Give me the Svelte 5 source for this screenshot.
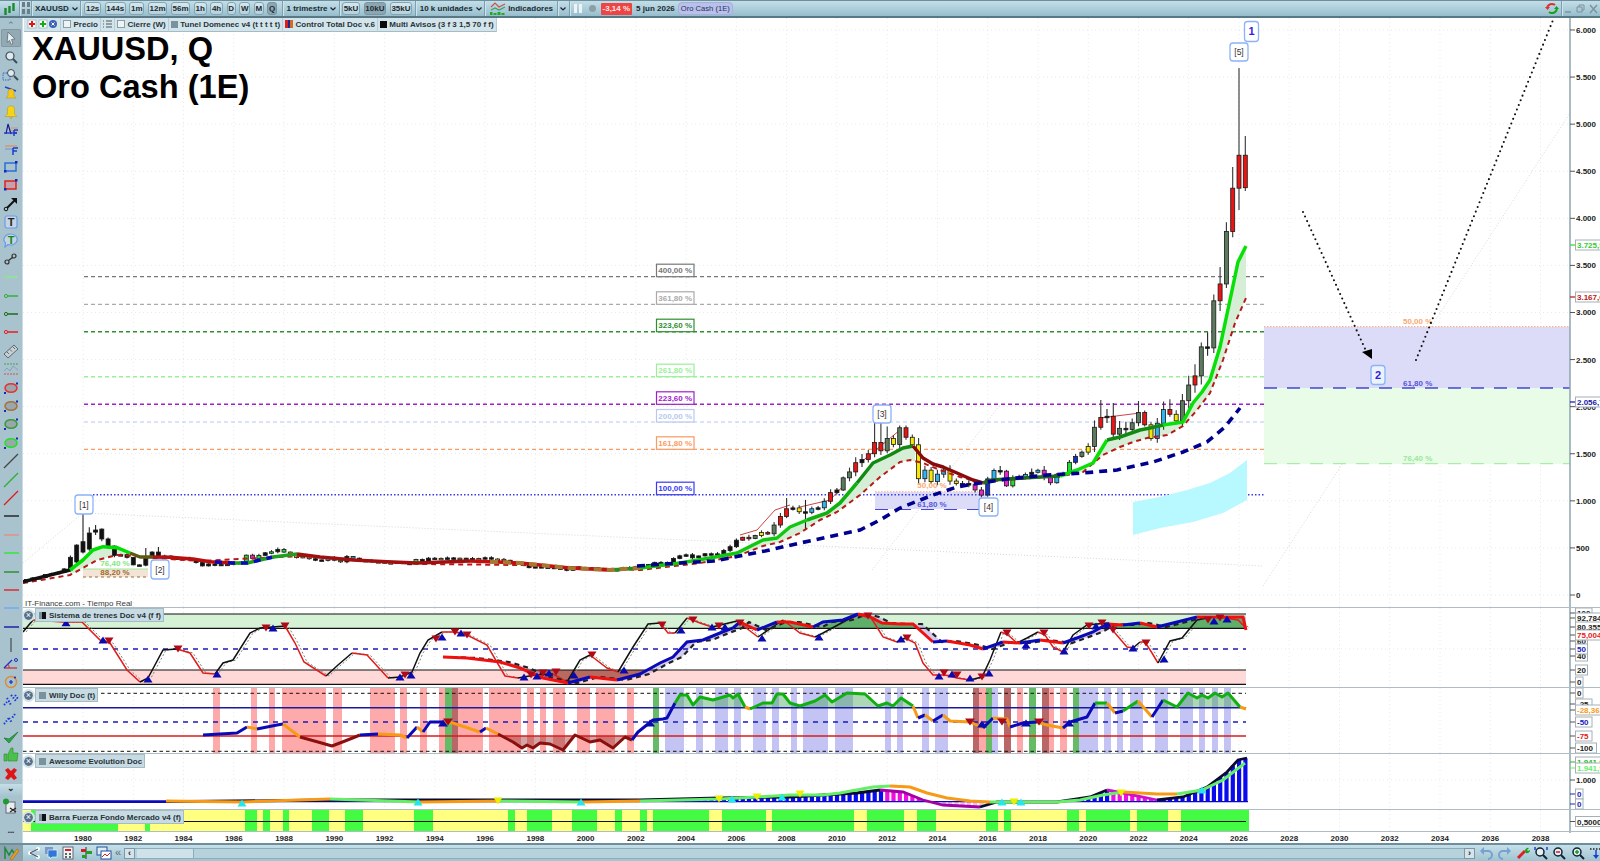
<script lang="ts">
  type Pt = [number, number];

  const yearX = (t: number) => 83 + (t - 1980) * 25.13;
  const priceY = (p: number) => 595 - p * 0.09417;
  const pts = (l: Pt[]) => l.map((p) => p[0] + "," + p[1]).join(" ");

  const interp = (l: Pt[], x: number) => {
    if (x <= l[0][0]) return l[0][1];
    for (let i = 1; i < l.length; i++) {
      if (x <= l[i][0]) {
        const [x0, y0] = l[i - 1];
        const [x1, y1] = l[i];
        return y0 + ((y1 - y0) * (x - x0)) / (x1 - x0);
      }
    }
    return l[l.length - 1][1];
  };
  const section = (l: Pt[], x0: number, x1: number): Pt[] => [
    [x0, interp(l, x0)],
    ...l.filter((p) => p[0] > x0 && p[0] < x1),
    [x1, interp(l, x1)],
  ];
  // cut a line in runs of one colour each
  const runs = (l: Pt[], colorOf: (a: Pt, b: Pt) => string) => {
    const out: { c: string; p: Pt[] }[] = [];
    for (let i = 1; i < l.length; i++) {
      const c = colorOf(l[i - 1], l[i]);
      const last = out[out.length - 1];
      if (last && last.c === c) last.p.push(l[i]);
      else out.push({ c, p: [l[i - 1], l[i]] });
    }
    return out;
  };
  const shifted = (l: Pt[], dx: number): Pt[] => l.map((p) => [p[0] + dx, p[1]]);
  const band = (top: Pt[], bottom: Pt[], x0: number, x1: number) =>
    pts([...section(top, x0, x1), ...section(bottom, x0, x1).reverse()]);
  const closedTo = (l: Pt[], y: number) => pts([[l[0][0], y], ...l, [l[l.length - 1][0], y]]);

  // quarterly closes and body colours, one row a year from 1977 on
  const rows = [
    "165|k", "181 184 217 226|kkkk", "240 277 397 512|kkkk", "494 653 666 589|kkkk",
    "513 423 428 400|kkkk", "320 317 397 456|kkkk", "414 413 394 382|kkkk", "388 378 344 309|kkkk",
    "330 317 326 327|kkkk", "346 345 423 388|kknm", "421 448 459 484|nknk", "456 437 397 410|nooo",
    "385 373 366 401|okkc", "369 352 408 391|onkc", "356 367 354 353|knko", "341 343 349 332|oook",
    "337 378 355 391|knkk", "389 385 394 383|kokk", "391 387 384 387|okko", "396 382 379 369|kkoo",
    "348 334 332 290|kkok", "301 296 294 288|kkkk", "280 262 299 290|kkkn", "277 288 273 272|kkkk",
    "258 270 293 279|kkkk", "301 318 323 347|kkkk", "336 346 388 416|kkkk", "427 395 415 438|kkkk",
    "428 437 473 513|kkkk", "582 613 599 632|krrg", "663 650 743 834|yrgr", "916 925 884 878|rkyk",
    "916 926 995 1087|ckcr", "1115 1244 1307 1405|kggr", "1439 1500 1620 1531|krrr", "1662 1598 1776 1675|gygr",
    "1595 1235 1326 1204|yycy", "1283 1327 1210 1184|ccyy", "1183 1172 1115 1061|kkmm", "1233 1322 1315 1159|bckm",
    "1249 1242 1280 1303|nkck", "1325 1253 1192 1282|cmmc", "1292 1409 1472 1517|onbg", "1577 1781 1886 1898|ygrk",
    "1708 1770 1757 1829|rgkg", "1937 1807 1661 1824|gryc", "1969 1919 1849 2063|cryg", "2230 2327 2635 2624|grgk",
    "3124 3303 3859 4320|grgr", "4670 4325|rr",
  ];
  const fills: Record<string, string> = {
    k: "#111", g: "#5b7a5e", r: "#ea1414", y: "#f6e800", c: "#2fb6ee",
    n: "#22dd33", m: "#ee22cc", b: "#1530c0", o: "#f7a21f",
  };
  const qi = (t: number) => Math.round((t - 1977.75) * 4);
  // bodies that the plain close-to-close rule gets wrong: [open, high, low, close]
  const fixed: Record<number, number[]> = {
    [qi(1979.5)]: [265, 420, 250, 400],
    [qi(1979.75)]: [350, 540, 340, 530],
    [qi(1980)]: [456, 870, 440, 566],
    [qi(1980.25)]: [488, 720, 470, 658],
    [qi(1980.5)]: [668, 743, 637, 690],
    [qi(1980.75)]: [595, 705, 570, 700],
    [qi(1981)]: [510, 610, 490, 595],
    [qi(1981.25)]: [420, 525, 400, 520],
  };
  const highs: Record<number, number> = {
    [qi(1982.5)]: 500, [qi(1983)]: 510, [qi(2008)]: 1030, [qi(2008.75)]: 1010,
    [qi(2011.5)]: 1826, [qi(2011.75)]: 1830, [qi(2012)]: 1790, [qi(2012.5)]: 1800, [qi(2012.75)]: 1800,
    [qi(2020.5)]: 2070, [qi(2021)]: 2040, [qi(2022)]: 2060, [qi(2023.25)]: 2080,
    [qi(2024.25)]: 2450, [qi(2024.5)]: 2680, [qi(2024.75)]: 2790, [qi(2025.25)]: 3483,
    [qi(2025.75)]: 4545, [qi(2026)]: 5596, [qi(2026.25)]: 4874,
  };
  const lows: Record<number, number> = {
    [qi(2008.75)]: 700, [qi(2024.75)]: 2540, [qi(2025.5)]: 3260, [qi(2025.75)]: 3800,
    [qi(2026)]: 4088, [qi(2026.25)]: 4290,
  };
  const candles: { x: number; top: number; bot: number; hi: number; lo: number; fill: string }[] = [];
  {
    let prev = 150;
    let i = 0;
    for (const row of rows) {
      const [cl, co] = row.split("|");
      cl.split(" ").forEach((s, n) => {
        const close = +s;
        const r = Math.abs(Math.sin(i * 12.9898) * 43758) % 1;
        const w = Math.max(prev, close) * 0.035 * (0.3 + r);
        let [o, h, l, c] = fixed[i] ?? [prev, Math.max(prev, close) + w, Math.min(prev, close) - w * 0.8, close];
        h = highs[i] ?? h;
        l = lows[i] ?? l;
        candles.push({
          x: +yearX(1977.75 + i / 4).toFixed(1),
          top: priceY(Math.max(o, c)),
          bot: priceY(Math.min(o, c)),
          hi: priceY(h),
          lo: priceY(l),
          fill: fills[co[n]],
        });
        prev = close;
        i++;
      });
    }
  }

  const main: Pt[] = [[23,581.7],[70,570],[83,560],[93,550],[103,546.7],[117,547.7],[130,553],[140,557],[153,557],[170,557.3],[193,559],[210,561.7],[233,563],[247,563],[273,557],[297,554],[320,557],[353,560],[387,561.7],[417,563],[470,561],[520,563],[570,568],[610,570],[640,568],[680,563],[710,558],[737,553],[763,540],[777,538],[790,527],[807,520],[827,513],[840,503],[857,483],[873,463],[890,455],[903,448],[913,446],[923,458],[933,464],[943,467],[957,473],[973,480],[983,483],[992,480],[1007,479],[1023,478],[1040,477],[1060,476],[1077,470],[1093,463],[1107,440],[1120,437],[1140,430],[1150,428],[1163,425],[1183,422],[1193,403],[1202,392],[1210,380],[1220,347],[1230,300],[1238,262],[1246,246]];
  const mainDash: Pt[] = [[23,583],[70,575],[83,568],[97,560],[117,555],[135,556],[153,558],[200,561],[300,556],[420,564],[520,565],[640,570],[700,563],[737,556],[763,546],[780,542],[800,533],[820,520],[837,512],[860,495],[880,477],[900,462],[910,460],[923,463],[940,470],[960,477],[980,482],[1007,480],[1067,475],[1083,472],[1103,455],[1120,447],[1133,442],[1147,438],[1167,435],[1183,426],[1197,410],[1210,393],[1223,360],[1235,323],[1246,298]];
  const navyDash: Pt[] = [[637,566],[680,563],[714,561],[765,551],[800,543],[860,530],[880,520],[900,508],[933,495],[957,487],[980,483],[1007,479],[1047,475],[1083,473],[1117,470],[1153,462],[1183,452],[1207,442],[1225,427],[1240,408]];
  const mainStops: [number, string][] = [[70,"#111"],[125,"#00e000"],[150,"#5c5a10"],[240,"#b80f0f"],[300,"#1f9f1f"],[470,"#a01010"],[620,"#c01010"],[640,"#1f8f1f"],[800,"#10c810"],[860,"#10b010"],[915,"#128a12"],[985,"#8a0a0a"],[1060,"#206a20"],[1105,"#08e008"],[1165,"#128a12"],[1250,"#08e008"]];
  const mainRuns = runs(main, (a, b) => (mainStops.find((s) => (a[0] + b[0]) / 2 < s[0]) ?? mainStops[0])[1]);

  const fibs = [
    { y: 276.7, t: "400,00 %", c: "#777777", d: "4 3", w: 1.3 },
    { y: 304.3, t: "361,80 %", c: "#aaaaaa", d: "4 3", w: 1.3 },
    { y: 331.7, t: "323,60 %", c: "#2f8f2f", d: "4 3", w: 1.4 },
    { y: 376.7, t: "261,80 %", c: "#98f098", d: "4 3", w: 1.4 },
    { y: 404.3, t: "223,60 %", c: "#a020c8", d: "4 3", w: 1.4 },
    { y: 422, t: "200,00 %", c: "#b8c8f0", d: "4 3", w: 1.2 },
    { y: 449.3, t: "161,80 %", c: "#fb9a62", d: "4 3", w: 1.2 },
    { y: 494.7, t: "100,00 %", c: "#3a3af0", d: "1.5 2", w: 1.5 },
  ];
  const boxes = [
    { x: 75, y: 495, w: 18, h: 19, t: "[1]" },
    { x: 151, y: 560, w: 18, h: 19, t: "[2]" },
    { x: 873, y: 405, w: 18, h: 18, t: "[3]" },
    { x: 979, y: 498, w: 19, h: 18, t: "[4]" },
    { x: 1230, y: 43, w: 18, h: 18, t: "[5]" },
  ];

  const yearTicks: number[] = [];
  for (let y = 1980; y <= 2038; y += 2) yearTicks.push(y);
  const priceTicks = [0, 500, 1000, 1500, 2000, 2500, 3000, 3500, 4000, 4500, 5000, 5500, 6000];
  const priceText = (p: number) => (p >= 1000 ? Math.floor(p / 1000) + "." + String(p % 1000).padStart(3, "0") : String(p));

  // sistema de trenes
  const fast: Pt[] = [[23,632],[33,620],[63,622],[82,622],[100,640],[110,643],[127,670],[140,682],[148,678],[163,650],[177,649],[190,653],[203,673],[215,674],[223,663],[233,660],[250,633],[260,628],[285,626],[295,643],[304,662],[326,676],[338,665],[352,653],[367,655],[388,678],[400,677],[412,672],[420,653],[428,640],[442,632],[455,632],[467,635],[487,645],[505,676],[518,678],[535,675],[553,674],[567,682],[580,660],[590,655],[607,668],[618,672],[633,647],[648,624],[660,623],[668,633],[675,633],[687,618],[700,623],[712,627],[737,621],[758,637],[783,620],[800,633],[815,637],[823,633],[847,620],[860,614],[870,616],[883,637],[897,642],[905,638],[915,643],[923,663],[933,675],[945,675],[957,678],[970,680],[982,677],[990,660],[1001,632],[1008,635],[1017,643],[1027,638],[1038,632],[1045,635],[1053,647],[1063,652],[1073,635],[1087,625],[1107,623],[1115,633],[1127,647],[1133,648],[1140,642],[1145,642],[1152,653],[1158,663],[1170,641],[1182,638],[1197,620],[1212,617],[1226,618],[1238,620],[1246,628]];
  const slow: Pt[] = [[443,657],[467,658],[500,662],[520,668],[543,678],[568,683],[590,677],[617,680],[640,674],[660,663],[673,657],[687,642],[703,640],[720,633],[733,628],[740,622],[757,630],[777,622],[790,622],[813,627],[823,622],[843,620],[858,614],[870,617],[882,623],[900,624],[913,624],[933,642],[947,641],[970,645],[983,649],[1003,642],[1020,643],[1040,640],[1063,643],[1077,638],[1093,632],[1107,624],[1123,625],[1140,623],[1157,627],[1173,623],[1197,617],[1243,617],[1246,630]];
  const slowDash = shifted(slow, 9).filter((p) => p[0] <= 1246);
  const trainsUp: Pt[] = [[66,622.7],[103,640],[148,679],[217,674],[273,628],[400,677],[411,675],[442,637],[461,633],[524,677],[537,676],[549,673],[574,675],[624,670],[681,630],[712,627],[725,627],[762,638],[819,637],[901,639],[939,676],[952,674],[970,678],[989,673],[1026,645],[1064,651],[1096,626],[1108,625],[1133,648],[1164,659],[1214,621],[1227,619]];
  const trainsDown: Pt[] = [[109,641],[178,649],[266,628],[285,626],[405,675],[436,639],[455,632],[467,635],[531,675],[543,673],[556,672],[592,655],[662,625],[693,620],[719,626],[740,623],[868,616],[907,638],[944,673],[957,675],[982,677],[1007,633],[1044,633],[1089,626],[1102,623],[1113,630],[1146,643],[1208,620],[1220,618]];

  // willy
  const R = "#ffaaaa", B = "#c4c4f4", G = "#66bb66", D = "#b86868";
  const willyBands: [number, number, string][] = [[213,220,R],[251,257,R],[269,275,R],[282,326,R],[333,342,R],[370,395,R],[400,407,R],[420,427,R],[439,445,R],[445,452,G],[452,458,D],[458,483,R],[489,521,R],[527,534,R],[540,546,R],[553,565,R],[577,590,R],[596,615,R],[627,634,R],[653,659,G],[665,684,B],[696,703,B],[715,728,B],[734,741,B],[753,766,B],[772,779,B],[791,797,B],[803,828,B],[835,853,B],[885,891,B],[897,903,B],[922,929,B],[935,948,B],[973,979,D],[979,986,R],[986,992,G],[992,998,B],[1004,1011,D],[1017,1023,R],[1029,1036,G],[1042,1049,D],[1049,1054,R],[1060,1067,R],[1073,1079,G],[1079,1098,B],[1104,1111,B],[1117,1123,B],[1130,1143,B],[1155,1168,B],[1180,1193,B],[1199,1205,B],[1212,1218,B],[1224,1231,B]];
  const willy: Pt[] = [[203,735],[237,733],[247,727],[257,729],[277,725],[283,724],[300,737],[318,742],[332,746],[345,741],[360,735],[378,734],[400,735],[407,738],[417,727],[423,732],[430,722],[442,722],[453,723],[480,732],[486,728],[498,734],[513,742],[522,748],[527,745],[533,748],[540,743],[550,744],[563,750],[575,735],[590,742],[600,740],[613,748],[625,737],[632,740],[638,732],[653,720],[663,719],[667,718],[675,703],[680,695],[687,695],[693,705],[700,697],[713,700],[730,695],[733,698],[738,694],[745,707],[750,709],[763,703],[772,703],[777,694],[783,694],[790,703],[800,706],[815,701],[825,695],[832,702],[847,693],[865,694],[878,706],[887,703],[893,706],[901,698],[913,706],[918,718],[925,715],[933,721],[943,715],[950,721],[970,722],[983,728],[993,718],[1007,719],[1010,727],[1023,723],[1037,722],[1047,725],[1063,728],[1070,722],[1087,717],[1095,703],[1107,703],[1115,713],[1123,711],[1138,701],[1152,717],[1163,700],[1177,707],[1188,693],[1197,698],[1202,695],[1208,698],[1215,693],[1222,697],[1228,693],[1240,707],[1246,709]];
  const willyColor = (a: Pt, b: Pt) => {
    const y = (a[1] + b[1]) / 2;
    if (y < 707.7) return "#10b010";
    if (y > 737) return "#8a1010";
    return b[1] <= a[1] ? "#0a0ab8" : "#f79a16";
  };
  const willyUp: Pt[] = [[443,723],[650,723],[982,724],[1026,723],[1069,723]];
  const willyDown: Pt[] = [[448,722],[970,722],[1002,722],[1039,722]];

  // awesome evolution
  const aoSignal: Pt[] = [[166,801],[242,802],[330,799],[420,802],[500,801],[582,802],[640,801],[720,799],[757,797],[790,795],[823,795],[840,793],[873,787],[890,786],[910,787],[927,793],[947,798],[970,801],[990,802],[1057,802],[1080,800],[1103,795],[1123,792],[1157,794],[1177,794],[1202,790],[1223,780],[1245,763]];
  const aoBlack: Pt[] = [[23,801.7],[166,801.7],[330,800],[500,800],[640,800],[720,798],[790,797],[857,793],[880,790],[903,792],[923,800],[943,805],[980,807],[997,802],[1057,802],[1090,797],[1107,790],[1123,793],[1157,800],[1183,797],[1207,787],[1227,772],[1238,760],[1247,758]];
  const sigRuns = runs(aoSignal, (a, b) => {
    const m = (a[0] + b[0]) / 2;
    if (m < 330) return "#f79a16";
    if (m < 420) return "#66ee66";
    if (m < 500) return "#f79a16";
    if (m < 600) return "#66ee66";
    if (m < 625) return "#f79a16";
    if (m < 890) return "#66ee66";
    if (m < 990) return "#f79a16";
    if (m < 1123) return "#66ee66";
    if (m < 1170) return "#f79a16";
    return "#66ee66";
  });
  const blackRuns = runs(aoBlack, (a, b) => {
    const m = (a[0] + b[0]) / 2;
    if (m < 166) return "#0a0ab8";
    if (m > 890 && m < 985) return "#a400a4";
    if (m > 1110 && m < 1165) return "#cc10cc";
    return "#0a0a30";
  });
  const aoBars = candles
    .filter((c) => c.x > 640)
    .map((c) => {
      const y = interp(aoBlack, c.x);
      const prev = interp(aoBlack, c.x - 6.3);
      const base = 801;
      return {
        x: c.x - 2,
        y: Math.min(y, base),
        h: Math.abs(base - y),
        fill: y > base ? "#f6b8e4" : y <= prev ? "#0a0aee" : "#ee10dd",
      };
    });
  const cyanTri: Pt[] = [[242,803],[418,802],[581,802],[732,799],[782,797],[1002,802],[1021,802],[1202,790]];
  const yellowTri: Pt[] = [[498,801],[719,799],[757,797],[800,794],[1014,802],[1121,793]];

  const forceGreen: [number, number][] = [[31,118],[145,150],[245,257],[263,270],[283,289],[312,329],[345,363],[414,433],[508,515],[527,552],[572,597],[615,622],[640,647],[653,709],[722,766],[772,854],[867,904],[917,936],[986,998],[1004,1011],[1067,1079],[1086,1130],[1137,1168],[1181,1249]];

  const up = (p: Pt, s = 4.5) => `${p[0] - s},${p[1] + 3.5} ${p[0] + s},${p[1] + 3.5} ${p[0]},${p[1] - 3.5}`;
  const down = (p: Pt, s = 4.5) => `${p[0] - s},${p[1] - 3.5} ${p[0] + s},${p[1] - 3.5} ${p[0]},${p[1] + 3.5}`;

  const scale1 = [
    { y: 613, t: "100" }, { y: 618, t: "92,784" }, { y: 627, t: "80,355" }, { y: 641, t: "60" },
    { y: 635, t: "75,004", c: "#e82020" }, { y: 656, t: "40" }, { y: 649, t: "50", c: "#2020c0" }, { y: 670, t: "20" }, { y: 682, t: "0" },
  ];
  const scale2 = [
    { y: 693, t: "0" }, { y: 704, t: "-25" }, { y: 710, t: "-28,361", c: "#f79a16" },
    { y: 722, t: "-50", c: "#2020c0" }, { y: 736, t: "-75", c: "#e02020" }, { y: 748, t: "-100" },
  ];
  const scale3 = [
    { y: 762, t: "1.941,9", c: "#22bb22" }, { y: 768, t: "1.941,9", c: "#66ee66" }, { y: 794, t: "0", c: "#2020c0" }, { y: 804, t: "0", c: "#2020c0" },
  ];

  const frames = ["12s", "144s", "1m", "12m", "56m", "1h", "4h", "D", "W", "M", "Q"];
  const volumes = ["5kU", "10kU", "35kU"];
  const tools: { k: string; c?: string }[] = [
    { k: "arrow" }, { k: "mag" }, { k: "zoomrect" }, { k: "alert" }, { k: "bell" }, { k: "fib" }, { k: "linesf" },
    { k: "para", c: "#7f9ccc" }, { k: "para", c: "#c44" }, { k: "bigarrow" }, { k: "tbox" }, { k: "tbubble" }, { k: "link" },
    { k: "dotline", c: "#8ce88c" }, { k: "dotline", c: "#35b035" }, { k: "dotline", c: "#1a6e1a" }, { k: "dotline", c: "#e81c1c" },
    { k: "ruler" }, { k: "bands" },
    { k: "ell", c: "#e83030" }, { k: "ell", c: "#a87038" }, { k: "ell", c: "#3a9a3a" }, { k: "ell", c: "#22e022" },
    { k: "diag", c: "#444" }, { k: "diag", c: "#28b028" }, { k: "diag", c: "#e01818" },
    { k: "h", c: "#111" }, { k: "h", c: "#f08a78" }, { k: "h", c: "#22ee22" }, { k: "h", c: "#1a8a1a" }, { k: "h", c: "#e01818" }, { k: "h", c: "#6aa8f8" }, { k: "h", c: "#0a0aa0" },
    { k: "v" }, { k: "angle" }, { k: "target" }, { k: "dots" }, { k: "dots2" }, { k: "check" }, { k: "thumb" }, { k: "cross" },
  ];
</script>

<div class="app">
  <header class="topbar">
    <svg class="ic first" width="12" height="14" viewBox="0 0 12 14">
      <path d="M1.500 6v7M5.500 4v7M9.500 1v8" stroke="#1c8a2c" stroke-width="2.400" />
    </svg>
    <span class="sep"></span>
    <svg class="ic" width="8" height="13" viewBox="0 0 8 13">
      <rect x="0" y="0" width="3" height="5" fill="#6d7d85" /><rect x="5" y="0" width="3" height="5" fill="#6d7d85" />
      <rect x="0" y="7" width="3" height="5" fill="#6d7d85" /><rect x="5" y="7" width="3" height="5" fill="#6d7d85" />
    </svg>
    <span class="sep"></span>
    <span class="sym">XAUUSD</span>
    <svg class="caret" width="6" height="4" viewBox="0 0 6 4"><path d="M.5 .5L3 3 5.500 .5" fill="none" stroke="#223" stroke-width="1.200" /></svg>
    <span class="sep"></span>
    <div class="btns one">
      {#each frames as f}
        <span class="tf" class:on={f === "Q"}>{f}</span>
      {/each}
    </div>
    <span class="sep"></span>
    <span class="plain">1 trimestre</span>
    <svg class="caret" width="6" height="4" viewBox="0 0 6 4"><path d="M.5 .5L3 3 5.500 .5" fill="none" stroke="#223" stroke-width="1.200" /></svg>
    <span class="sep"></span>
    <div class="btns two">
      {#each volumes as v}
        <span class="tf" class:on={v === "10kU"}>{v}</span>
      {/each}
    </div>
    <span class="sep"></span>
    <span class="plain">10 k unidades</span>
    <svg class="caret" width="6" height="4" viewBox="0 0 6 4"><path d="M.5 .5L3 3 5.500 .5" fill="none" stroke="#223" stroke-width="1.200" /></svg>
    <span class="sep"></span>
    <svg class="ic ind-icon" width="16" height="15" viewBox="0 0 16 15">
      <path d="M1 6l4-4 4 4 6-3" fill="none" stroke="#d05050" stroke-width="1.200" />
      <path d="M1 9l4-2 4 2 6-3" fill="none" stroke="#40a060" stroke-width="1.200" />
      <path d="M1 14v-3M5 14v-2M9 14v-3M13 14v-2" stroke="#22aa22" stroke-width="3" />
    </svg>
    <span class="ind">Indicadores</span>
    <span class="sep"></span>
    <svg class="caret solo" width="6" height="4" viewBox="0 0 6 4"><path d="M.5 .5L3 3 5.500 .5" fill="none" stroke="#223" stroke-width="1.200" /></svg>
    <span class="sep"></span>
    <svg class="ic pause" width="8" height="9" viewBox="0 0 8 9">
      <rect width="3" height="9" fill="#eef3f5" /><rect x="5" width="3" height="9" fill="#eef3f5" />
    </svg>
    <span class="rec"></span>
    <span class="pct">-3,14 %</span>
    <span class="date">5 jun 2026</span>
    <span class="tagname">Oro Cash (1E)</span>
    <span class="grow"></span>
    <svg class="ic" width="16" height="15" viewBox="0 0 16 15">
      <path d="M3 7a5 5 0 0 1 8-3" fill="none" stroke="#e03030" stroke-width="2" />
      <path d="M1 6h5l-2.500 3z" fill="#e03030" />
      <path d="M13 8a5 5 0 0 1-8 3" fill="none" stroke="#18a018" stroke-width="2" />
      <path d="M10 8h5l-2.500-3z" fill="#18a018" />
    </svg>
    <span class="sep"></span>
    <svg class="ic" width="36" height="10" viewBox="0 0 36 10">
      <path d="M1 8h6" stroke="#7c929c" stroke-width="1.400" />
      <path d="M13 3h5v5h-5zM15 3V1h5v5h-2" fill="none" stroke="#7c929c" />
      <path d="M26 1l7 8M33 1l-7 8" stroke="#7c929c" stroke-width="1.400" />
    </svg>
  </header>

  <div class="middle">
    <aside class="left">
      <span class="chev">⌃</span>
      {#each tools as t, i}
        <span class="tool" class:on={i === 0}>
          <svg width="18" height="16" viewBox="0 0 18 16">
            {#if t.k === "arrow"}
              <path d="M6 2l7 7-3.500 .5L11 13.500 9 14.500 7.500 10.500 5 12.500z" fill="#e4eef2" stroke="#6e7d84" />
            {:else if t.k === "mag"}
              <circle cx="8" cy="7" r="4" fill="#dfeaf0" stroke="#3c4c54" stroke-width="1.200" /><path d="M11 10l4 4" stroke="#3c4c54" stroke-width="2" />
            {:else if t.k === "zoomrect"}
              <path d="M1 6h7v7H1z" fill="none" stroke="#2a6ad0" stroke-dasharray="1.500 1" />
              <circle cx="9" cy="6" r="3.500" fill="#dfeaf0" stroke="#3c4c54" /><path d="M12 9l4 4" stroke="#3c4c54" stroke-width="2" />
            {:else if t.k === "alert"}
              <path d="M3 2l11 4" stroke="#2040d0" stroke-width="1.400" /><path d="M9 4a3 3 0 0 1 3 3v4l2 2H4l2-2V7a3 3 0 0 1 3-3z" fill="#f2c81c" stroke="#b89010" stroke-width=".5" />
            {:else if t.k === "bell"}
              <path d="M9 2a3 3 0 0 1 3.500 3v5l2.500 2.500H3L5.500 10V5A3 3 0 0 1 9 2z" fill="#f4d414" stroke="#b89010" stroke-width=".5" />
              <path d="M7 13.500h4l-2 1.500z" fill="#c8a010" />
            {:else if t.k === "fib"}
              <path d="M4 12L6 2l3 10" fill="none" stroke="#1a1a80" stroke-width="1.200" /><path d="M2 11h13" stroke="#2030d0" stroke-width="1.300" /><path d="M9 6h7M9 9h7" stroke="#e09060" stroke-width="1.200" /><path d="M12 8v6M12 8h4M12 11h3" stroke="#1840d0" stroke-width="1.500" fill="none" />
            {:else if t.k === "linesf"}
              <path d="M3 5h12" stroke="#e09060" stroke-width="1.300" /><path d="M3 8h8" stroke="#80a0d0" stroke-width="1.300" /><path d="M11 7v7M11 7h5M11 10h4" stroke="#1840d0" stroke-width="1.500" fill="none" />
            {:else if t.k === "para"}
              <rect x="3" y="4" width="11" height="8" fill={t.c === "#c44" ? "#c8a0a8" : "none"} stroke={t.c === "#c44" ? "#e01818" : "#2468d8"} stroke-width="1.400" />
              <rect x="13" y="2" width="2.500" height="2.500" fill="#1428c0" /><rect x="2" y="11" width="2.500" height="2.500" fill="#1428c0" />
            {:else if t.k === "bigarrow"}
              <circle cx="4" cy="13" r="1.800" fill="none" stroke="#111" /><path d="M5 12l8-8" stroke="#111" stroke-width="2" /><path d="M9 2h6v6z" fill="#111" />
            {:else if t.k === "tbox"}
              <rect x="3" y="2" width="12" height="12" rx="2" fill="#c4d4e4" stroke="#6a9ce8" stroke-width="1.200" />
              <text x="9" y="12" class="tt" fill="#222">T</text>
            {:else if t.k === "tbubble"}
              <path d="M9 2a6.500 5.500 0 1 1-3 10.500L3 15l.5-4A6.500 5.500 0 0 1 9 2z" fill="#c4d4e4" stroke="#6a9ce8" stroke-width="1.200" />
              <text x="9" y="11.500" class="tt" fill="#118a11">T</text>
            {:else if t.k === "link"}
              <circle cx="5" cy="11" r="2" fill="none" stroke="#333" stroke-width="1.200" /><circle cx="12" cy="5" r="2" fill="none" stroke="#333" stroke-width="1.200" /><path d="M6.500 9.500l4-3" stroke="#333" stroke-width="1.400" />
            {:else if t.k === "dotline"}
              <circle cx="4" cy="8" r="1.600" fill="none" stroke={t.c} /><path d="M6 8h10" stroke={t.c} stroke-width="1.500" />
            {:else if t.k === "ruler"}
              <path d="M2 11L12 2l4 4L6 15z" fill="#c8d0d4" stroke="#5c6a72" /><path d="M5 9l2 2M8 6.500l2 2M11 4l2 2" stroke="#5c6a72" />
            {:else if t.k === "bands"}
              <path d="M2 3h14" stroke="#4aa04a" stroke-dasharray="2 1" /><path d="M2 13h14" stroke="#d05050" stroke-dasharray="2 1" /><path d="M2 10l3-3 3 3 3-5 5 4" fill="none" stroke="#8aa0c0" />
            {:else if t.k === "ell"}
              <ellipse cx="9" cy="8" rx="6" ry="4.300" fill="#9aa8ae" stroke={t.c} stroke-width="1.500" />
              <rect x="14" y="2.500" width="2" height="2" fill="#1428c0" /><rect x="2" y="12" width="2" height="2" fill="#1428c0" />
            {:else if t.k === "diag"}
              <path d="M2 15L16 1" stroke={t.c} stroke-width="1.300" />
            {:else if t.k === "h"}
              <path d="M2 8h15" stroke={t.c} stroke-width="1.300" />
            {:else if t.k === "v"}
              <path d="M9 1v14" stroke="#6c7a82" stroke-width="2" />
            {:else if t.k === "angle"}
              <path d="M2 13h13" stroke="#d03030" stroke-width="1.300" /><path d="M2 13l8-8" stroke="#2030c0" stroke-width="1.300" /><path d="M7 13a5 5 0 0 0-1-4" fill="none" stroke="#d03030" /><circle cx="14" cy="5" r="1.500" fill="none" stroke="#2030c0" />
            {:else if t.k === "target"}
              <circle cx="9" cy="8" r="5.500" fill="none" stroke="#e08a30" stroke-width="1.400" /><path d="M7 8h4M9 6v4" stroke="#1428c0" stroke-width="1.200" /><circle cx="13" cy="3.500" r="1" fill="#1428c0" />
            {:else if t.k === "dots"}
              <path d="M2 13l3-3M5 6l4 7M9 3l5 6M13 3l3 4" stroke="#1a3ad8" stroke-width="2" stroke-dasharray="1.500 1.500" />
            {:else if t.k === "dots2"}
              <path d="M2 13l5-6M7 7l3 5M13 3l-3 4" stroke="#1a3ad8" stroke-width="2" stroke-dasharray="1.500 1.500" />
            {:else if t.k === "check"}
              <path d="M2 9l5 5 9-11-9 7z" fill="#2ea64a" stroke="#1a7a30" stroke-width=".8" />
            {:else if t.k === "thumb"}
              <path d="M6 7l3-6h2v5h5l-1 8H6zM2 7h3v7H2z" fill="#4cc04c" stroke="#2a8a2a" stroke-width=".6" />
            {:else if t.k === "cross"}
              <path d="M3 4l3-2 3 3 3-3 3 2-3 4 3 4-3 2-3-3-3 3-3-2 3-4z" fill="#e01414" />
            {/if}
          </svg>
        </span>
      {/each}
      <span class="more">⌄</span>
      <span class="tool">
        <svg width="18" height="16" viewBox="0 0 18 16">
          <rect x="4" y="4" width="9" height="11" fill="#e8eef0" stroke="#667" /><circle cx="4" cy="3.500" r="3" fill="#1c9c30" /><path d="M8 10l6 4M14 10l-6 4" stroke="#222" stroke-width="1.300" />
        </svg>
      </span>
      <span class="dots3">•••</span>
    </aside>

    <main class="charts">
      <section class="pane pmain">
        <svg width="1577" height="590" viewBox="23 18 1577 590">
          {#each yearTicks as y}
            <line x1={yearX(y)} x2={yearX(y)} y1="18" y2="607" class="gr" />
          {/each}
          {#each priceTicks as p}
            <line x1="23" x2="1570" y1={priceY(p)} y2={priceY(p)} class="gr" />
          {/each}

          <polyline points="23,563 83,513 1263,566" class="faint" />
          <line x1="872" y1="570" x2="1000" y2="405" class="faint" />
          <line x1="1263" y1="586" x2="1570" y2="113" class="faint" />

          <!-- retracement zones -->
          <rect x="1264" y="327" width="306" height="61" fill="#dddcf8" />
          <rect x="1264" y="388" width="306" height="76" fill="#e8fce8" />
          <line x1="1264" x2="1570" y1="326.700" y2="326.700" stroke="#fbb090" stroke-width="1.300" stroke-dasharray="1.500 1.500" />
          <line x1="1264" x2="1570" y1="388" y2="388" stroke="#4646d8" stroke-width="1.300" stroke-dasharray="13 10" />
          <line x1="1264" x2="1570" y1="463.700" y2="463.700" stroke="#a8eea8" stroke-width="1.300" stroke-dasharray="13 10" />
          <text x="1403" y="324" class="pc" fill="#fba870">50,00 %</text>
          <text x="1403" y="386" class="pc" fill="#5656d8">61,80 %</text>
          <text x="1403" y="461" class="pc" fill="#9ae89a">76,40 %</text>

          <rect x="875" y="492" width="113" height="17" fill="#dddcf8" />
          <line x1="875" x2="988" y1="491.700" y2="491.700" stroke="#fbb090" stroke-dasharray="1.500 1.500" />
          <line x1="875" x2="988" y1="509.500" y2="509.500" stroke="#4646d8" stroke-dasharray="13 10" />
          <rect x="83" y="569" width="65" height="8" fill="#f3e4d6" />
          <line x1="83" x2="148" y1="569" y2="569" stroke="#9ae89a" />
          <line x1="83" x2="148" y1="577" y2="577" stroke="#9a6a3a" stroke-dasharray="3 3" />

          {#each fibs as f}
            <line x1={f.t === "100,00 %" ? 93 : 84} x2="1264" y1={f.y} y2={f.y} stroke={f.c} stroke-width={f.w} stroke-dasharray={f.d} />
            <rect x="656.500" y={f.y - 12.500} width="37.500" height="12.500" fill="#fff" stroke={f.c} stroke-width="1.200" />
            <text x="675.200" y={f.y - 3.500} class="fb" fill={f.c}>{f.t}</text>
          {/each}

          <polygon points="1133,502 1160,497 1187,490 1210,483 1230,473 1247,460 1247,500 1223,513 1193,522 1160,528 1133,535" fill="#b8f8ff" />

          <polygon points={band(main, mainDash, 70, 125)} fill="#d6eed6" />
          <polygon points={band(main, mainDash, 740, 915)} fill="#d6eed6" />
          <polygon points={band(main, mainDash, 1060, 1246)} fill="#d6eed6" />

          <polyline points="740,535 757,530 775,510 790,505" class="redthin" />
          <polyline points="800,507 830,500" class="redthin" />
          <polyline points="830,500 844,485" class="redthin" />
          <polyline points="860,463 900,430" class="redthin" />
          <polyline points="1100,418 1140,413" class="redthin" />

          {#each candles as c}
            <line x1={c.x} x2={c.x} y1={c.hi} y2={c.lo} stroke={c.fill === "#111" ? "#222" : "#333"} stroke-width="1.100" />
            <rect x={c.x - 2} y={c.top} width="4" height={Math.max(c.bot - c.top, 1.500)} fill={c.fill} stroke="#1a1a1a" stroke-width=".8" />
          {/each}

          <polyline points={pts(mainDash)} fill="none" stroke="#b81818" stroke-width="2" stroke-dasharray="5 4" />
          {#each mainRuns as r}
            <polyline points={pts(r.p)} fill="none" stroke={r.c} stroke-width="3.500" stroke-linejoin="round" />
          {/each}
          <polyline points={pts(section(main, 215, 272))} fill="none" stroke="#0a0ab8" stroke-width="3.500" stroke-dasharray="7 6" />
          <polyline points={pts(section(main, 490, 640))} fill="none" stroke="#a87830" stroke-width="4" stroke-dasharray="8 5" />
          <polyline points={pts(navyDash)} fill="none" stroke="#00008f" stroke-width="3.600" stroke-dasharray="8 6" />

          <text x="115" y="566" class="pc mid" fill="#80e880">76,40 %</text>
          <text x="115" y="575" class="pc mid" fill="#a06a30">88,20 %</text>
          <text x="932" y="488" class="pc mid" fill="#fba870">50,00 %</text>
          <text x="932" y="507" class="pc mid" fill="#5656d8">61,80 %</text>

          <line x1="1303" y1="212" x2="1366" y2="351" class="bigdot" />
          <polygon points="1362,352 1372,349 1372,359" fill="#000" />
          <line x1="1416" y1="360" x2="1553" y2="20" class="bigdot" />

          {#each boxes as b}
            <rect x={b.x} y={b.y} width={b.w} height={b.h} rx="3" fill="#fff" stroke="#8cb2fa" stroke-width="1.300" />
            <text x={b.x + b.w / 2} y={b.y + b.h / 2 + 3} class="wave">{b.t}</text>
          {/each}
          <rect x="1244.500" y="21.500" width="14" height="20" rx="3" fill="#fff" stroke="#8cb2fa" stroke-width="1.300" />
          <text x="1251.500" y="35" class="major">1</text>
          <rect x="1371" y="365.500" width="14" height="19" rx="3" fill="#e8f4f8" stroke="#8cb2fa" stroke-width="1.300" />
          <text x="1378" y="379" class="major">2</text>

          <text x="25" y="606" class="credit">IT-Finance.com - Tiempo Real</text>

          <line x1="1570" x2="1570" y1="18" y2="608" class="axis" />
          {#each priceTicks as p}
            <line x1="1570" x2="1575" y1={priceY(p)} y2={priceY(p)} class="axis thin" />
            <text x="1576" y={priceY(p) + 3} class="sc" fill="#222">{priceText(p)}</text>
          {/each}
          <line x1="1570" x2="1575" y1="245" y2="245" stroke="#33dd33" stroke-width="1.300" />
          <rect x="1575.500" y="240" width="30" height="10" fill="#fff" stroke="#a4b0b6" />
          <text x="1577" y="248" class="sc" fill="#33cc33">3.725,9</text>
          <line x1="1570" x2="1575" y1="297" y2="297" stroke="#c82020" stroke-width="1.300" />
          <rect x="1575.500" y="292" width="30" height="10" fill="#fff" stroke="#a4b0b6" />
          <text x="1577" y="300" class="sc" fill="#b82020">3.167,6</text>
          <line x1="1570" x2="1575" y1="402" y2="402" stroke="#2020c0" stroke-width="1.300" />
          <rect x="1575.500" y="397" width="30" height="10" fill="#fff" stroke="#a4b0b6" />
          <text x="1577" y="405" class="sc" fill="#2020a8">2.056,7</text>
        </svg>
        <h1 class="title">XAUUSD, Q<br />Oro Cash (1E)</h1>
        <div class="legend">
          <span class="lg small">
            <svg width="30" height="10" viewBox="0 0 30 10">
              <rect x="1" y="1" width="8" height="8" fill="#fff" stroke="#a8c0cc" /><path d="M5 2v6M2 5h6" stroke="#e01818" stroke-width="2" />
              <rect x="12" y="1" width="8" height="8" fill="#fff" stroke="#a8c0cc" /><path d="M16 2v6M13 5h6" stroke="#12b012" stroke-width="2" />
              <circle cx="26" cy="5" r="4" fill="#3c64b8" /><path d="M24.500 3.500l3 3M27.500 3.500l-3 3" stroke="#fff" />
            </svg>
          </span>
          <span class="lg"><i class="chk"></i>Precio</span>
          <span class="lg"><svg width="9" height="8" viewBox="0 0 9 8"><path d="M0 1h1M0 4h1M0 7h1M3 1h6M3 4h6M3 7h6" stroke="#4a5a62" /></svg></span>
          <span class="lg"><i class="chk"></i>Cierre (W)</span>
          <span class="lg"><i class="sq grey"></i>Tunel Domenec v4 (t t t t t)</span>
          <span class="lg"><i class="tri"><b></b><b></b><b></b></i>Control Total Doc v.6</span>
          <span class="lg"><i class="sq black"></i>Multi Avisos (3 f 3 1,5 70 f f)</span>
        </div>
      </section>

      <section class="pane" style="height:80px">
        <svg width="1577" height="80" viewBox="23 608 1577 80">
          <defs>
            <clipPath id="aboveBand"><rect x="23" y="600" width="1230" height="28" /></clipPath>
            <clipPath id="belowBand"><rect x="23" y="670" width="1230" height="16" /></clipPath>
          </defs>
          {#each yearTicks as y}
            <line x1={yearX(y)} x2={yearX(y)} y1="608" y2="688" class="gr" />
          {/each}
          <line x1="1253" x2="1570" y1="649" y2="649" class="gr" />
          <rect x="23" y="614" width="1223" height="14" fill="#d6f2d6" />
          <rect x="23" y="670" width="1223" height="14.500" fill="#ffd8d8" />
          <polygon points={closedTo(slow, 628)} fill="#5fae6a" clip-path="url(#aboveBand)" />
          <polygon points={closedTo(slow, 670)} fill="#b86a60" clip-path="url(#belowBand)" />
          <polygon points={band(slow, slowDash, 452, 1246)} fill="#b8a8e4" opacity=".6" />
          <line x1="23" x2="1246" y1="614" y2="614" class="blk" />
          <line x1="23" x2="1246" y1="628.300" y2="628.300" class="blk" />
          <line x1="23" x2="1246" y1="670" y2="670" class="blk" />
          <line x1="23" x2="1246" y1="684.300" y2="684.300" class="blk" />
          <line x1="23" x2="1246" y1="649" y2="649" class="navydash" />

          <polyline points={pts(shifted(fast, 3))} fill="none" stroke="#7a8a7a" stroke-dasharray="2 2" />
          {#each runs(fast, (a, b) => (b[1] < a[1] ? "#111" : "#e01c1c")) as r}
            <polyline points={pts(r.p)} fill="none" stroke={r.c} stroke-width="1.500" />
          {/each}
          <polyline points={pts(slowDash)} fill="none" stroke="#222" stroke-width="2.200" stroke-dasharray="5 4" />
          {#each runs(slow, (a, b) => (b[1] < a[1] ? "#0a0ab8" : "#f01010")) as r}
            <polyline points={pts(r.p)} fill="none" stroke={r.c} stroke-width="3" />
          {/each}
          {#each trainsUp as p}
            <polygon points={up(p)} fill="#0a0ab0" />
          {/each}
          {#each trainsDown as p}
            <polygon points={down(p)} fill="#b00a1a" />
          {/each}

          <line x1="1570" x2="1570" y1="608" y2="688" class="axis" />
          {#each scale1 as s}
            <line x1="1570" x2="1575" y1={s.y} y2={s.y} class="axis thin" />
            <rect x="1575.500" y={s.y - 5} width={s.t.length * 4.500 + 3} height="10" fill="#fff" stroke="#a4b0b6" />
            <text x="1577" y={s.y + 3} class="sc" fill={s.c ?? "#222"}>{s.t}</text>
          {/each}
        </svg>
        <div class="phead">
          <span class="close">×</span>
          <span class="pname"><i class="sq half"></i>Sistema de trenes Doc v4 (f f)</span>
        </div>
      </section>

      <section class="pane" style="height:66px">
        <svg width="1577" height="66" viewBox="23 688 1577 66">
          <defs>
            <clipPath id="aboveNavy"><rect x="23" y="688" width="1230" height="19.700" /></clipPath>
            <clipPath id="belowRed"><rect x="23" y="736" width="1230" height="20" /></clipPath>
          </defs>
          {#each yearTicks as y}
            <line x1={yearX(y)} x2={yearX(y)} y1="688" y2="754" class="gr" />
          {/each}
          {#each willyBands as b}
            <rect x={b[0]} y="688" width={b[1] - b[0]} height="65" fill={b[2]} />
          {/each}
          <polygon points={closedTo(section(willy, 667, 1246), 707.700)} fill="#3f9f4f" opacity=".42" clip-path="url(#aboveNavy)" />
          <polygon points={closedTo(section(willy, 500, 640), 736)} fill="#8a2020" opacity=".4" clip-path="url(#belowRed)" />
          <line x1="23" x2="1246" y1="693.300" y2="693.300" class="blackdash" />
          <line x1="23" x2="1246" y1="707.700" y2="707.700" stroke="#1a1a9c" stroke-width="1.500" />
          <line x1="23" x2="1246" y1="722" y2="722" class="navydash" />
          <line x1="23" x2="1246" y1="736" y2="736" stroke="#d81c1c" stroke-width="1.500" />
          <line x1="23" x2="1246" y1="751.300" y2="751.300" class="blackdash" />
          {#each runs(willy, willyColor) as r}
            <polyline points={pts(r.p)} fill="none" stroke={r.c} stroke-width="3" stroke-linejoin="round" />
          {/each}
          {#each willyUp as p}
            <polygon points={up(p, 5)} fill="#0a0ab0" />
          {/each}
          {#each willyDown as p}
            <polygon points={down(p, 5)} fill="#a80a1a" />
          {/each}

          <line x1="1570" x2="1570" y1="688" y2="754" class="axis" />
          {#each scale2 as s}
            <line x1="1570" x2="1575" y1={s.y} y2={s.y} class="axis thin" />
            <rect x="1575.500" y={s.y - 5} width={s.t.length * 4.500 + 3} height="10" fill="#fff" stroke="#a4b0b6" />
            <text x="1577" y={s.y + 3} class="sc" fill={s.c ?? "#222"}>{s.t}</text>
          {/each}
        </svg>
        <div class="phead">
          <span class="close">×</span>
          <span class="pname"><i class="sq grey"></i>Willy Doc (t)</span>
        </div>
      </section>

      <section class="pane" style="height:56px">
        <svg width="1577" height="56" viewBox="23 754 1577 56">
          {#each yearTicks as y}
            <line x1={yearX(y)} x2={yearX(y)} y1="754" y2="810" class="gr" />
          {/each}
          <line x1="23" x2="1570" y1="780" y2="780" class="gr" />
          {#each aoBars as b}
            <rect x={b.x} y={b.y} width="4.200" height={b.h} fill={b.fill} />
          {/each}
          <line x1="23" x2="1248" y1="801.700" y2="801.700" stroke="#0a0ab8" stroke-width="1.300" />
          {#each blackRuns as r}
            <polyline points={pts(r.p)} fill="none" stroke={r.c} stroke-width="2.800" />
          {/each}
          {#each sigRuns as r}
            <polyline points={pts(r.p)} fill="none" stroke={r.c} stroke-width="3" />
          {/each}
          {#each cyanTri as p}
            <polygon points={up(p)} fill="#22e6f0" />
          {/each}
          {#each yellowTri as p}
            <polygon points={down(p)} fill="#eeee00" />
          {/each}

          <line x1="1570" x2="1570" y1="754" y2="810" class="axis" />
          <line x1="1570" x2="1575" y1="780" y2="780" class="axis thin" />
          <text x="1576" y="783" class="sc" fill="#222">1.000</text>
          {#each scale3 as s}
            <line x1="1570" x2="1575" y1={s.y} y2={s.y} stroke={s.c} />
            <rect x="1575.500" y={s.y - 5} width={s.t.length * 4.500 + 3} height="10" fill="#fff" stroke="#a4b0b6" />
            <text x="1577" y={s.y + 3} class="sc" fill={s.c}>{s.t}</text>
          {/each}
        </svg>
        <div class="phead">
          <span class="close">×</span>
          <span class="pname"><i class="sq grey"></i>Awesome Evolution Doc</span>
        </div>
      </section>

      <section class="pane" style="height:22px">
        <svg width="1577" height="22" viewBox="23 810 1577 22">
          {#each yearTicks as y}
            <line x1={yearX(y)} x2={yearX(y)} y1="810" y2="832" class="gr" />
          {/each}
          <rect x="23" y="810" width="1226" height="21" fill="#ffff80" />
          {#each forceGreen as g}
            <rect x={g[0]} y="810" width={g[1] - g[0]} height="21" fill="#42fb42" />
          {/each}
          <line x1="23" x2="1246" y1="821.500" y2="821.500" stroke="#111" />
          <line x1="1570" x2="1570" y1="810" y2="832" class="axis" />
          <line x1="1570" x2="1575" y1="821.500" y2="821.500" class="axis thin" />
          <rect x="1575.500" y="816.500" width="28" height="10" fill="#fff" stroke="#a4b0b6" />
          <text x="1577" y="824.500" class="sc" fill="#222">0,5000</text>
        </svg>
        <div class="phead">
          <span class="close">×</span>
          <span class="pname"><i class="sq half"></i>Barra Fuerza Fondo Mercado v4 (f)</span>
        </div>
      </section>

      <svg class="xaxis" width="1577" height="11" viewBox="23 832 1577 11">
        <line x1="1570" x2="1570" y1="832" y2="833" class="axis" />
        {#each yearTicks as y}
          <text x={yearX(y)} y="841" class="yr">{y}</text>
        {/each}
      </svg>
    </main>
  </div>

  <footer class="bottombar">
    <span class="cornerbtn">
      <svg width="16" height="15" viewBox="0 0 16 15">
        <path d="M1 13V2l4 7 3-5 2 3" fill="none" stroke="#1a8a3a" stroke-width="1.500" /><path d="M6 13L13 3l2 1.500L8 14z" fill="#e8a020" stroke="#a06a10" stroke-width=".6" />
      </svg>
    </span>
    <svg class="bi" width="14" height="14" viewBox="0 0 14 14"><circle cx="3" cy="7" r="2" fill="#fff" /><circle cx="11" cy="3" r="2" fill="#fff" /><circle cx="11" cy="11" r="2" fill="#fff" /><path d="M3 7l8-4M3 7l8 4" stroke="#445" /></svg>
    <svg class="bi" width="14" height="14" viewBox="0 0 14 14"><rect x="1" y="1" width="8" height="7" fill="#7a98c8" /><path d="M4 4h9v7H8l-2 2v-2H4z" fill="#2f78d8" stroke="#fff" stroke-width=".6" /></svg>
    <svg class="bi" width="14" height="14" viewBox="0 0 14 14"><rect x="2" y="1" width="10" height="12" fill="#f0f4f6" stroke="#667" /><path d="M4 4h6" stroke="#d02020" stroke-width="2" /><path d="M4 8h2M8 8h2M4 11h2M8 11h2" stroke="#333" stroke-width="1.500" /></svg>
    <svg class="bi" width="14" height="14" viewBox="0 0 14 14"><path d="M7 1v12" stroke="#333" /><path d="M2 3h5v3H2z" fill="#d02020" /><path d="M7 5h6v3H7z" fill="#22a022" /><path d="M3 9h4v3H3z" fill="#22a022" /></svg>
    <svg class="bi" width="16" height="14" viewBox="0 0 16 14"><rect x="1" y="1" width="10" height="8" fill="#dfeaf2" stroke="#2050a0" /><rect x="5" y="5" width="10" height="8" fill="#fff" stroke="#2050a0" /><path d="M6 11l3-3 2 2 3-3" fill="none" stroke="#d02020" /></svg>
    <span class="lq">«</span>
    <span class="sb end">‹</span>
    <span class="track"><i class="thumbbar"></i></span>
    <span class="sb end">›</span>
    <svg class="br" width="14" height="14" viewBox="0 0 14 14"><path d="M4 5h5a4 4 0 0 1 0 8" fill="none" stroke="#78a0d0" stroke-width="2" /><path d="M5 1v8L1 5z" fill="#78a0d0" /></svg>
    <svg class="br" width="14" height="14" viewBox="0 0 14 14"><path d="M10 5H5a4 4 0 0 0 0 8" fill="none" stroke="#78a0d0" stroke-width="2" /><path d="M9 1v8l4-4z" fill="#78a0d0" /></svg>
    <svg class="br" width="14" height="14" viewBox="0 0 14 14"><path d="M2 12l7-7" stroke="#e02020" stroke-width="3" /><path d="M9 5a3 3 0 0 1 4-3l-2 2 1 1 2-1a3 3 0 0 1-4 3z" fill="#18a018" /></svg>
    <svg class="br" width="14" height="14" viewBox="0 0 14 14"><circle cx="6" cy="6" r="4" fill="#e4eef2" stroke="#123" stroke-width="1.500" /><path d="M9 9l4 4" stroke="#123" stroke-width="2" /><path d="M1 1v3M13 1v3" stroke="#1840d0" stroke-width="1.500" /></svg>
    <svg class="br" width="14" height="14" viewBox="0 0 14 14"><circle cx="6" cy="6" r="4" fill="#e4eef2" stroke="#123" stroke-width="1.500" /><path d="M9 9l4 4" stroke="#123" stroke-width="2" /><path d="M4 6h4" stroke="#d02020" stroke-width="1.500" /></svg>
    <svg class="br" width="14" height="14" viewBox="0 0 14 14"><circle cx="6" cy="6" r="4" fill="#e4eef2" stroke="#123" stroke-width="1.500" /><path d="M9 9l4 4" stroke="#123" stroke-width="2" /><path d="M4 6h4M6 4v4" stroke="#18a018" stroke-width="1.500" /></svg>
    <svg class="br" width="14" height="14" viewBox="0 0 14 14"><path d="M1 3h12" stroke="#222" stroke-width="1.500" stroke-dasharray="1.500 1.500" /><path d="M7 4v6" stroke="#1840d0" stroke-width="1.500" /><path d="M4 9h6l-3 4z" fill="#1840d0" /></svg>
  </footer>
</div>

<style>
  :global(body) {
    margin: 0;
    background: #fff;
  }
  .app {
    width: 1600px;
    height: 861px;
    overflow: hidden;
    display: flex;
    flex-direction: column;
    font-family: "Liberation Sans", Arial, sans-serif;
    color: #1c2a30;
  }

  /* top bar */
  .topbar {
    height: 18px;
    flex: none;
    box-sizing: border-box;
    display: flex;
    align-items: center;
    background: linear-gradient(#c3dee8, #a4c8d6 70%, #97bccb);
    border-top: 1px solid #6e8e9c;
    border-bottom: 2px solid #587886;
    font-size: 8px;
    font-weight: bold;
    white-space: nowrap;
  }
  .ic { flex: none; }
  .first { margin: 0 1px 0 4px; }
  .sep {
    flex: none;
    width: 1px;
    height: 15px;
    margin: 0 2px 0 1.500px;
    background: #7c9eae;
    box-shadow: 1px 0 0 #cfe4ec;
  }
  .sym { margin-left: 1px; }
  .caret {
    flex: none;
    margin: 0 1px 0 3px;
  }
  .caret.solo { margin: 0 1px 0 0; }
  .btns {
    display: flex;
    gap: 3.600px;
    padding-right: 1px;
  }
  .btns.one { padding: 0 3px 0 1px; }
  .tf {
    box-sizing: border-box;
    height: 13px;
    line-height: 11px;
    padding: 0 .7px;
    border: 1px solid #84a4b2;
    border-radius: 3px;
    background: linear-gradient(#d6e8ee, #b4d0dc);
    text-align: center;
  }
  .tf.on {
    background: #8ba6b2;
    border-color: #7a94a0;
  }
  .plain { margin-left: 2px; }
  .ind-icon { margin-left: 3px; }
  .ind { margin: 0 2.500px 0 2px; }
  .pause { margin: 0 7px 0 2px; }
  .rec {
    width: 7px;
    height: 7px;
    border-radius: 50%;
    background: #8c9ea6;
    margin-right: 5px;
  }
  .pct {
    background: #ee4444;
    color: #ffe8e8;
    padding: 0 2px;
    height: 12px;
    line-height: 12px;
    border-radius: 1px;
  }
  .date { margin-left: 4px; }
  .tagname {
    margin-left: 3px;
    padding: 1px 2px;
    background: #b9c0ea;
    border: 1px solid #a8aee0;
    border-radius: 4px;
    color: #26325c;
    font-size: 7.600px;
    font-weight: normal;
  }
  .grow { flex: 1; }

  /* left tool column */
  .middle {
    flex: 1;
    min-height: 0;
    display: flex;
  }
  .left {
    width: 23px;
    flex: none;
    box-sizing: border-box;
    background: #a8c2ce;
    border-right: 1px solid #c8dde6;
    display: flex;
    flex-direction: column;
    align-items: center;
    overflow: hidden;
  }
  .chev {
    height: 11px;
    font-size: 9px;
    line-height: 14px;
    color: #5a7482;
  }
  .tool {
    flex: none;
    width: 20px;
    height: 18.400px;
    display: flex;
    align-items: center;
    justify-content: center;
  }
  .tool.on {
    background: #93aab5;
    border-radius: 2px;
    box-shadow: inset 0 0 0 1px #83999f;
  }
  .more {
    width: 100%;
    height: 13px;
    margin-top: 1px;
    flex: none;
    background: linear-gradient(#c6dde6, #a4c2ce);
    text-align: center;
    font-size: 9px;
    line-height: 8px;
    font-weight: bold;
  }
  .dots3 {
    margin-top: 14px;
    font-size: 6px;
    color: #334;
  }
  .tt {
    font: bold 11px "Liberation Sans", sans-serif;
    text-anchor: middle;
  }

  /* chart panes */
  .charts {
    flex: 1;
    min-width: 0;
    display: flex;
    flex-direction: column;
  }
  .pane {
    position: relative;
    flex: none;
    box-sizing: border-box;
    border-bottom: 1.500px solid #aebcc3;
    overflow: hidden;
  }
  .pmain { height: 590px; }
  .pane svg, .xaxis { display: block; }
  .gr {
    stroke: #e9e9e9;
    stroke-dasharray: 1 3;
  }
  .faint {
    fill: none;
    stroke: #d8d8d8;
    stroke-dasharray: 1 2;
  }
  .redthin {
    fill: none;
    stroke: #cc4444;
  }
  .bigdot {
    stroke: #111;
    stroke-width: 2.100;
    stroke-linecap: round;
    stroke-dasharray: 0 5;
  }
  .axis {
    stroke: #8fa4ae;
    stroke-width: 1.500;
  }
  .axis.thin { stroke: #555; stroke-width: 1; }
  .blk { stroke: #111; stroke-width: 1.200; }
  .navydash {
    stroke: #1a1ab8;
    stroke-width: 1.500;
    stroke-dasharray: 5 5;
  }
  .blackdash {
    stroke: #111;
    stroke-dasharray: 3.500 3;
  }
  .sc {
    font: bold 8px "Liberation Sans", sans-serif;
  }
  .fb {
    font: bold 8px "Liberation Sans", sans-serif;
    text-anchor: middle;
  }
  .pc {
    font: bold 8px "Liberation Sans", sans-serif;
  }
  .pc.mid { text-anchor: middle; }
  .wave {
    font: 8.500px "Liberation Sans", sans-serif;
    text-anchor: middle;
    fill: #333;
  }
  .major {
    font: bold 11px "Liberation Sans", sans-serif;
    text-anchor: middle;
    fill: #3a1ae0;
  }
  .credit {
    font: 8px "Liberation Sans", sans-serif;
    fill: #3a3a3a;
  }
  .yr {
    font: bold 8px "Liberation Sans", sans-serif;
    text-anchor: middle;
    fill: #222;
  }

  .legend {
    position: absolute;
    top: 0;
    left: 1px;
    height: 13.500px;
    display: flex;
    font-size: 8px;
    font-weight: bold;
    color: #26343a;
  }
  .lg {
    display: flex;
    align-items: center;
    gap: 2.500px;
    padding: 0 2px;
    background: #d3e4eb;
    border-right: 1px solid #b8cdd6;
    border-bottom: 1px solid #a4bcc6;
    white-space: nowrap;
  }
  .lg.small { padding: 0 3px; }
  .chk {
    width: 6px;
    height: 6px;
    background: #eef3f5;
    border: 1px solid #8a9ea8;
  }
  .sq {
    flex: none;
    width: 7px;
    height: 7px;
    display: inline-block;
  }
  .sq.grey { background: #7a929c; }
  .sq.black { background: #0a0a0a; }
  .sq.half { background: linear-gradient(90deg, #7a929c 45%, #111 45%); }
  .tri {
    display: flex;
    width: 8px;
    height: 8px;
  }
  .tri b { flex: 1; }
  .tri b:nth-child(1) { background: #d82020; }
  .tri b:nth-child(2) { background: #1a2a90; }
  .tri b:nth-child(3) { background: #d86a20; }

  .title {
    position: absolute;
    top: 12px;
    left: 9px;
    margin: 0;
    font-size: 32.600px;
    line-height: 38px;
    font-weight: bold;
    color: #000;
    pointer-events: none;
  }

  .phead {
    position: absolute;
    top: 0;
    left: 1px;
    display: flex;
    align-items: center;
    gap: 2px;
  }
  .close {
    width: 9px;
    height: 9px;
    border-radius: 50%;
    background: #57708a;
    color: #fff;
    font-size: 9px;
    line-height: 8px;
    text-align: center;
    outline: 2px solid #d3e4eb;
  }
  .pname {
    display: flex;
    align-items: center;
    gap: 3px;
    height: 12px;
    padding: 0 2px 0 3px;
    background: #c8dbe3;
    border: 1px solid #a4bcc6;
    font-size: 8px;
    font-weight: bold;
    color: #26343a;
    white-space: nowrap;
  }

  /* bottom bar */
  .bottombar {
    height: 18px;
    width: 1603px;
    flex: none;
    box-sizing: border-box;
    display: flex;
    align-items: center;
    background: linear-gradient(#c6dfe8, #a0c4d2);
    border-top: 2px solid #6d8f9d;
  }
  .cornerbtn {
    width: 23px;
    height: 100%;
    background: #8ba4b0;
    display: flex;
    align-items: center;
    justify-content: center;
    margin-right: 2px;
  }
  .bi { margin: 0 1.700px; }
  .lq {
    margin: -2px 3px 0 1px;
    font-size: 11px;
    color: #5a6a72;
  }
  .sb {
    flex: none;
    width: 11px;
    height: 11px;
    box-sizing: border-box;
    background: #d6e4ea;
    border: 1px solid #7d98a4;
    font-size: 9px;
    line-height: 8px;
    text-align: center;
    font-weight: bold;
  }
  .track {
    flex: 1;
    height: 11px;
    box-sizing: border-box;
    background: #b6d2dc;
    border-top: 1px solid #8fabb6;
    border-bottom: 1px solid #8fabb6;
  }
  .thumbbar {
    display: block;
    width: 56px;
    height: 100%;
    margin-left: 2px;
    background: #cfe2e9;
    border-right: 1px solid #8fabb6;
  }
  .br { margin-left: 4.300px; flex: none; }
</style>
